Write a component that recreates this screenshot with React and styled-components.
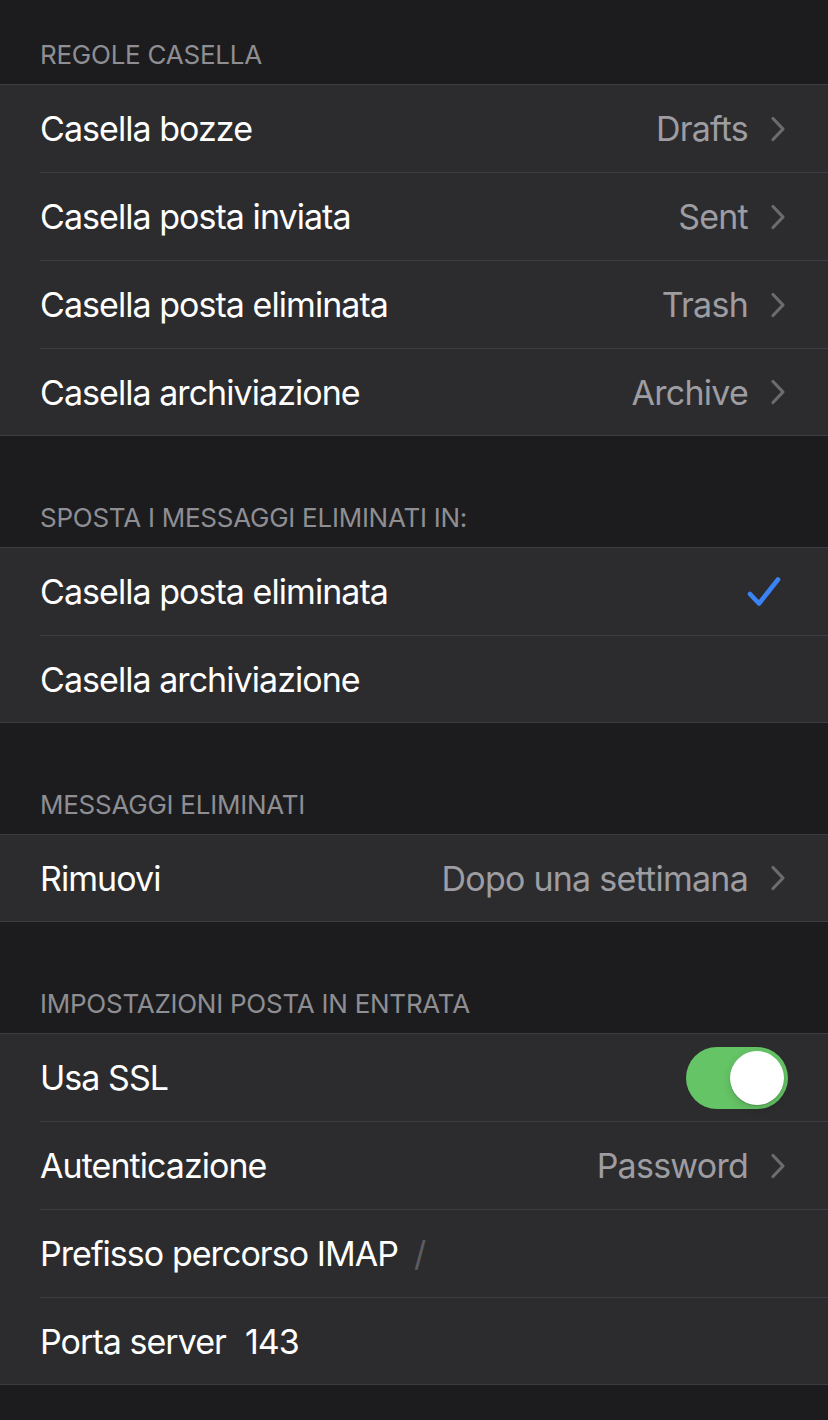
import React from "react";
import styled, { createGlobalStyle } from "styled-components";

const Global = createGlobalStyle`
  html, body { margin: 0; padding: 0; background: #1c1c1e; }
  body { font-family: Inter, "Noto Sans", "Liberation Sans", sans-serif; -webkit-font-smoothing: antialiased; }
`;

const Page = styled.div`
  width: 828px;
  min-height: 1420px;
  background: #1c1c1e;
  display: flex;
  flex-direction: column;
`;

const Section = styled.section`
  display: flex;
  flex-direction: column;
  margin-top: ${(p) => (p.$first ? 0 : 27)}px;
`;

const Header = styled.div`
  padding: 39px 40px 13px;
  font-size: 26px;
  line-height: 32px;
  color: #8e8e93;
  letter-spacing: -0.25px;
  text-transform: uppercase;
`;

const Group = styled.div`
  background: #2c2c2e;
  border-top: 1px solid #3d3d41;
  border-bottom: 1px solid #3d3d41;
`;

const Row = styled.div`
  padding-left: 40px;
`;

const RowInner = styled.div`
  height: ${(p) => (p.$last ? 86 : 87)}px;
  display: flex;
  align-items: center;
  padding-right: 40px;
  border-bottom: ${(p) => (p.$last ? "none" : "1px solid #3d3d41")};
`;

const Label = styled.span`
  font-size: 34px;
  color: #ffffff;
  letter-spacing: -0.95px;
  white-space: nowrap;
`;

const Spacer = styled.div`
  flex: 1;
`;

const Value = styled.span`
  font-size: 34px;
  color: #9d9da2;
  letter-spacing: -0.75px;
  white-space: nowrap;
`;

const Field = styled.span`
  font-size: 34px;
  margin-left: ${(p) => (p.$placeholder ? 16 : 19)}px;
  letter-spacing: -0.95px;
  color: ${(p) => (p.$placeholder ? "#5c5c60" : "#ffffff")};
`;

const ChevronBox = styled.svg`
  width: 16px;
  height: 26px;
  margin-left: 22px;
  margin-right: 2px;
  flex-shrink: 0;
`;

const Chevron = () => (
  <ChevronBox viewBox="0 0 16 26">
    <path d="M3 2.5 L13 13 L3 23.5" fill="none" stroke="#6b6b70" strokeWidth="3.2" strokeLinecap="round" strokeLinejoin="round" />
  </ChevronBox>
);

const CheckBox = styled.svg`
  width: 36px;
  height: 32px;
  margin-right: 6px;
`;

const Check = () => (
  <CheckBox viewBox="0 0 36 32">
    <path d="M4 18 L13 27.5 L32 3.5" fill="none" stroke="#3a83f5" strokeWidth="4.6" strokeLinecap="round" strokeLinejoin="round" />
  </CheckBox>
);

const Toggle = styled.div`
  width: 102px;
  height: 62px;
  border-radius: 31px;
  background: #65c466;
  display: flex;
  align-items: center;
  justify-content: ${(p) => (p.$on ? "flex-end" : "flex-start")};
  padding: 0 4px;
  box-sizing: border-box;
`;

const Knob = styled.div`
  width: 54px;
  height: 54px;
  border-radius: 50%;
  background: #ffffff;
  box-shadow: 0 3px 8px rgba(0, 0, 0, 0.15), 0 1px 1px rgba(0, 0, 0, 0.16);
`;

const NavRow = ({ label, value, last }) => (
  <Row>
    <RowInner $last={last}>
      <Label>{label}</Label>
      <Spacer />
      <Value>{value}</Value>
      <Chevron />
    </RowInner>
  </Row>
);

export default function App() {
  return (
    <>
      <Global />
      <Page>
        <Section $first>
          <Header>Regole casella</Header>
          <Group>
            <NavRow label="Casella bozze" value="Drafts" />
            <NavRow label="Casella posta inviata" value="Sent" />
            <NavRow label="Casella posta eliminata" value="Trash" />
            <NavRow label="Casella archiviazione" value="Archive" last />
          </Group>
        </Section>

        <Section>
          <Header>Sposta i messaggi eliminati in:</Header>
          <Group>
            <Row>
              <RowInner>
                <Label>Casella posta eliminata</Label>
                <Spacer />
                <Check />
              </RowInner>
            </Row>
            <Row>
              <RowInner $last>
                <Label>Casella archiviazione</Label>
              </RowInner>
            </Row>
          </Group>
        </Section>

        <Section>
          <Header>Messaggi eliminati</Header>
          <Group>
            <NavRow label="Rimuovi" value="Dopo una settimana" last />
          </Group>
        </Section>

        <Section>
          <Header>Impostazioni posta in entrata</Header>
          <Group>
            <Row>
              <RowInner>
                <Label>Usa SSL</Label>
                <Spacer />
                <Toggle $on>
                  <Knob />
                </Toggle>
              </RowInner>
            </Row>
            <NavRow label="Autenticazione" value="Password" />
            <Row>
              <RowInner>
                <Label>Prefisso percorso IMAP</Label>
                <Field $placeholder>/</Field>
              </RowInner>
            </Row>
            <Row>
              <RowInner $last>
                <Label>Porta server</Label>
                <Field>143</Field>
              </RowInner>
            </Row>
          </Group>
        </Section>
      </Page>
    </>
  );
}
